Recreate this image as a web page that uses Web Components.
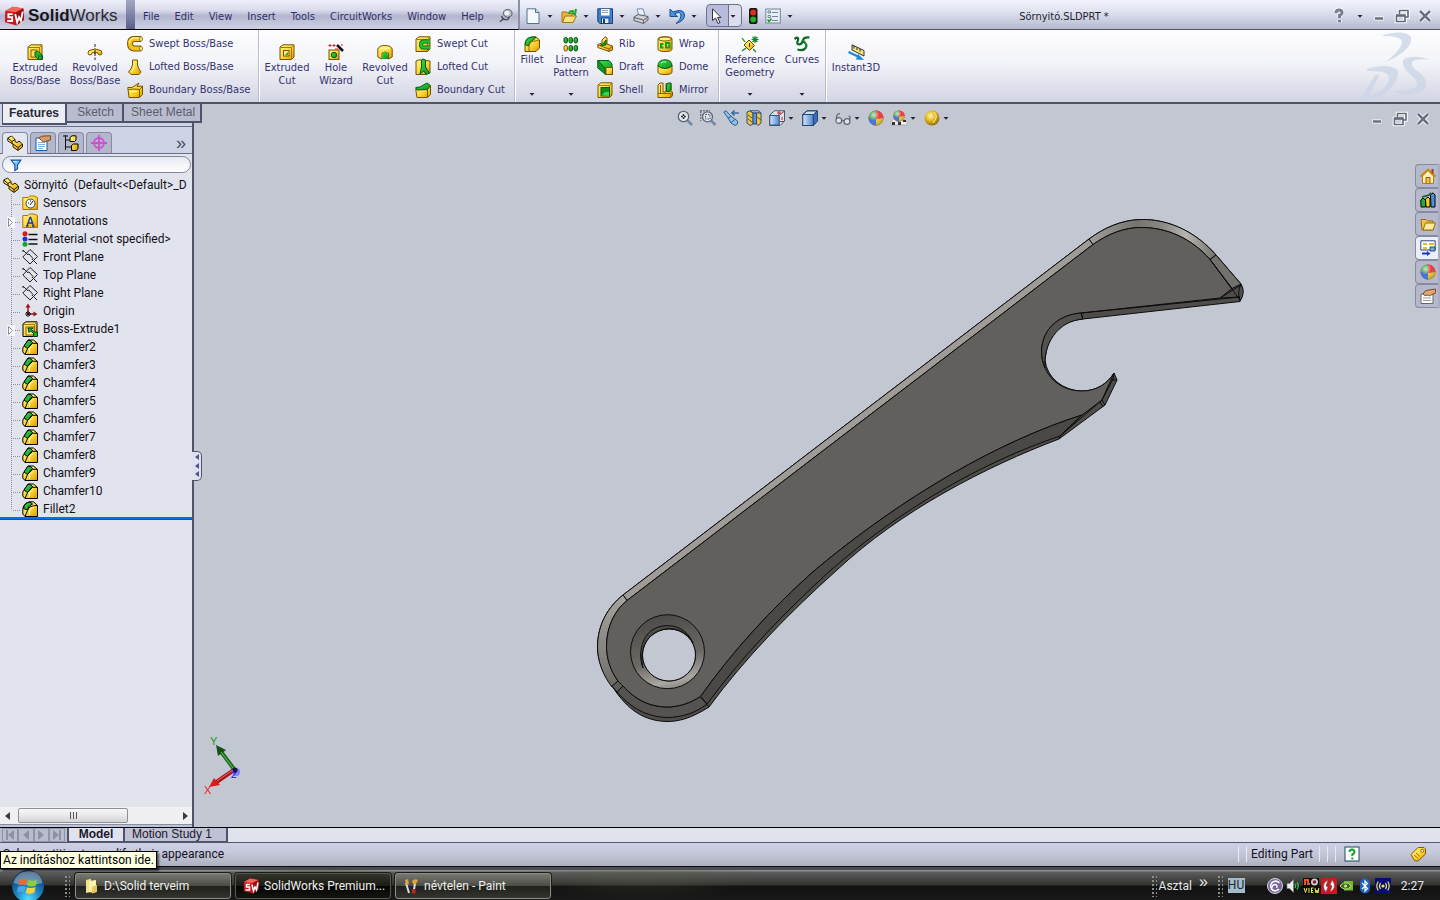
<!DOCTYPE html>
<html lang="hu">
<head>
<meta charset="utf-8">
<title>Sörnyitó.SLDPRT - SolidWorks</title>
<style>
html,body{margin:0;height:100%}
body{overflow:hidden;background:#c3c7d2}
</style>
</head>
<body>
<sw-app></sw-app>
<script>
const UI = '"DejaVu Sans Condensed","Liberation Sans",sans-serif';
const ARIAL = '"Liberation Sans",Arial,sans-serif';
const TREE = 'Roboto,"Open Sans",sans-serif';
const RESET = `:host,*{box-sizing:border-box}button{font:inherit;color:inherit;border:0;background:none;padding:0;margin:0;cursor:default;text-align:inherit}`;

function define(name, html, setup){
  const t = document.createElement('template');
  t.innerHTML = html;
  customElements.define(name, class extends HTMLElement{
    connectedCallback(){
      if(this.shadowRoot) return;
      this.attachShadow({mode:'open'}).append(t.content.cloneNode(true));
      if(setup) setup(this, this.shadowRoot);
    }
  });
}

const DEFS = `<defs>
<linearGradient id="y" x1="0" y1="0" x2="1" y2="1"><stop offset="0" stop-color="#fff68a"/><stop offset=".5" stop-color="#ffd83a"/><stop offset="1" stop-color="#d79a00"/></linearGradient>
<linearGradient id="g" x1="0" y1="0" x2="1" y2="1"><stop offset="0" stop-color="#3ee04a"/><stop offset="1" stop-color="#0a8f1e"/></linearGradient>
<linearGradient id="b" x1="0" y1="0" x2="1" y2="0"><stop offset="0" stop-color="#d3e8fc"/><stop offset="1" stop-color="#4c86d0"/></linearGradient>
<radialGradient id="s" cx=".35" cy=".3" r=".8"><stop offset="0" stop-color="#fff" stop-opacity=".75"/><stop offset=".5" stop-color="#fff" stop-opacity="0"/><stop offset="1" stop-color="#000" stop-opacity=".35"/></radialGradient>
<radialGradient id="au" cx=".4" cy=".35" r=".7"><stop offset="0" stop-color="#fff7b0"/><stop offset=".5" stop-color="#e3b21c"/><stop offset="1" stop-color="#8d6400"/></radialGradient>
<radialGradient id="orb" cx=".5" cy=".9" r=".9"><stop offset="0" stop-color="#4fe0ff"/><stop offset=".45" stop-color="#1c7fc0"/><stop offset="1" stop-color="#0c2c50"/></radialGradient>
</defs>`;
const BOX = `<path d="M1 3 4 .8H15V13L12.500 15.500H1Z" fill="url(#y)" stroke="#7a5200"/><path d="M1.500 3.500H12.500V15M12.500 3.500 15 1" fill="none" stroke="#a87800"/>`;
const BOXK = BOX.replace('#7a5200','#000');
const BALL = `<circle cx="8" cy="8" r="7.500" fill="#d8333a"/><path d="M8 .5A7.500 7.500 0 0 0 .5 8L8 9Z" fill="#2f9e3c"/><path d="M8 .5A7.500 7.500 0 0 1 15.500 8L8 9Z" fill="#e53b3b"/><path d="M.5 8A7.500 7.500 0 0 0 8 15.500V9Z" fill="#3c73d8"/><path d="M8 15.500A7.500 7.500 0 0 0 15.500 8L8 9Z" fill="#e8c12e"/>`;
const ICONS = {
 down:`<path d="M5.500 7h5L8 9.800Z" fill="#22223c"/>`,
 extrude:BOX+`<rect x="4" y="6" width="6" height="7" fill="#ffe35c" stroke="#8a6000"/><path d="M8 8 11 7.500 15.500 11.500V15.500H11.500L8 12Z" fill="url(#g)" stroke="#055c10"/><path d="M8 8.500 11.500 12V15M11.500 12H15" stroke="#055c10" fill="none" stroke-width=".7"/>`,
 revolve:`<path d="M8 0V16" stroke="#222" stroke-dasharray="3 1.500"/><path d="M1 9Q1 6 4 6 8 4 12 6 15 6 15 9 15 11 13 11 11 11 11 9 8 7.500 5 9 5 11 3 11 1 11 1 9Z" fill="url(#y)" stroke="#7a5200"/><circle cx="3" cy="9" r="1" fill="#fff3a0"/><path d="M8 6v4" stroke="#222"/>`,
 sweep:`<path d="M14 3H7Q3 3 3 7.500T7 12.500H14" fill="none" stroke="#7a5200" stroke-width="6"/><path d="M14 3H7Q3 3 3 7.500T7 12.500H14" fill="none" stroke="#f5c21c" stroke-width="4"/><path d="M13 2H7Q2.500 3 2.500 7" fill="none" stroke="#fff08a" stroke-width="1.300"/><ellipse cx="14" cy="3" rx="1.500" ry="2.300" fill="#ffec80" stroke="#7a5200" stroke-width=".7"/><ellipse cx="14" cy="12.500" rx="1.500" ry="2.300" fill="#ffec80" stroke="#7a5200" stroke-width=".7"/>`,
 loft:`<path d="M5.500 1H10.500V6Q11.500 10 14 13L12 15.500H4L1.500 13Q4.500 10 5.500 6Z" fill="url(#y)" stroke="#7a5200"/><path d="M7 3v5L5 13" stroke="#fff7a8" fill="none"/>`,
 boundary:`<path d="M.8 5.500H5L12 1 10 4.500 15.500 4V12.500L12.500 15.500H2Z" fill="url(#y)" stroke="#7a5200"/><path d="M1.500 7.500Q7 6.500 12.500 7.500L15 5M12.500 7.500V15" fill="none" stroke="#7a5200"/><path d="M3 9.500h7" stroke="#fff7a8"/>`,
 boundarycut:`<path d="M.8 6.500V8L2 15.500H12.500L15.500 12.500V4Z" fill="url(#y)" stroke="#7a5200"/><path d="M.8 5.500 5 5 12 1 15.500 3.500 12.500 7.500 2 8Z" fill="url(#g)" stroke="#055c10"/><path d="M12.500 8v7" stroke="#7a5200"/>`,
 excut:BOX+`<rect x="4.500" y="6.500" width="5.500" height="5.500" fill="#ffe98a" stroke="#7a5200"/><path d="M6 11 9 8V11Z" fill="#1dab2c"/>`,
 hole:`<rect x="1" y="6" width="10" height="9.500" fill="url(#y)" stroke="#7a5200"/><circle cx="6" cy="11" r="2.700" fill="url(#g)" stroke="#055c10"/><path d="M9 1 15 7" stroke="#111" stroke-width="2.500"/><path d="M2 0v3M.5 1.500h3M6 0v3M4.500 1.500h3M13 1h2M10 5h-3" stroke="#d22"/>`,
 revcut:`<path d="M.8 5Q2 1.500 8 1.500T15.200 5V13L11.500 15V9H5V15L.8 13Z" fill="url(#y)" stroke="#7a5200"/><path d="M5 15Q5 8 8 7 11 8 11.500 15Z" fill="url(#g)"/><ellipse cx="8" cy="4" rx="5" ry="1.500" fill="#fff08a"/>`,
 sweepcut:BOX+`<path d="M15 5.500H9Q6 5.500 6 8.500T9 11.500H15" fill="none" stroke="#055c10" stroke-width="4"/><path d="M15 5.500H9Q6 5.500 6 8.500T9 11.500H15" fill="none" stroke="#21c234" stroke-width="2.500"/>`,
 loftcut:`<path d="M1 2 4 .8 15 2V14L10 15.500H1Z" fill="url(#y)" stroke="#7a5200"/><path d="M6.500 1 8 0 10.500 1V8L14.500 14 11 15.500 9 12 5 15 6.500 8Z" fill="url(#g)" stroke="#055c10"/>`,
 fillet:`<path d="M1 9Q1 2 8 1L12 1 15.500 4V12L12 15.500H1Z" fill="url(#y)" stroke="#6b4a00"/><path d="M1 8.500Q1.500 1.500 8 1L12 1 9.500 4Q5 5 4.500 10Z" fill="url(#g)" stroke="#055c10"/><path d="M5 15V11Q5 5.500 11 5L15 4" fill="none" stroke="#9a6c00"/>`,
 linear:[1,6,11].map(x=>`<rect x="${x}" y="1.500" width="3.500" height="5.500" rx="1.700" fill="url(#g)" stroke="#064d0e"/><rect x="${x}" y="9.500" width="3.500" height="5.500" rx="1.700" fill="url(#${x==1?'y':'g'})" stroke="#${x==1?'7a5200':'064d0e'}"/>`).join(''),
 rib:`<path d="M5 4 8 .8 10 2V8L15.500 10V14L12 15.500 .8 11.500V8.500L5 7Z" fill="url(#y)" stroke="#7a5200"/><path d="M9 4V9L3 9.500Q7 8 9 4Z" fill="url(#g)" stroke="#055c10"/><path d="M1 9 12 13 15 10.500M12 13v2" fill="none" stroke="#8a6000"/>`,
 draft:`<path d="M.8 1.500H12L15 5V14L8 15.500V11Z" fill="url(#g)" stroke="#055c10"/><path d="M.8 1.500V9L8 15V9Z" fill="#0a9a22" stroke="#055c10"/><rect x="9" y="8.500" width="6.500" height="7" fill="url(#y)" stroke="#7a5200"/>`,
 shell:BOX+`<rect x="4" y="5.500" width="8.500" height="8.500" fill="#0a8f1e" stroke="#055c10"/><path d="M4.500 13.500 8 10H12V14Z" fill="#35d545"/>`,
 wrap:`<path d="M1 3Q1 .8 8 .8T15 3V13Q15 15.500 8 15.500T1 13Z" fill="url(#y)" stroke="#7a5200"/><ellipse cx="8" cy="3" rx="6.500" ry="2" fill="#fff08a" stroke="#7a5200"/><path d="M6.500 8H4V11.500H6.500M9 7H12.500V11.500H9Z" fill="none" stroke="#0ca31f" stroke-width="2"/>`,
 dome:`<path d="M1 6V13Q1 15.500 8 15.500T15 13V6Z" fill="url(#y)" stroke="#7a5200"/><path d="M1 7Q1 .8 8 .8T15 7Q12 9.500 8 9.500T1 7Z" fill="url(#g)" stroke="#055c10"/><path d="M4 4Q6 2 9 3" stroke="#b6ffb6" fill="none"/>`,
 mirror:`<path d="M1 3 3 1H6V10H9V1.500H14V10H15.500V13.500L14 15.500H1Z" fill="url(#y)" stroke="#7a5200"/><path d="M9.500 3 11 1H14V8L12.500 9.500H9.500Z" fill="url(#g)" stroke="#055c10"/><path d="M1 11.500H14V15M3.500 3v8" stroke="#8a6000" fill="none"/>`,
 refgeo:`<path d="M7 4 12.500 9.500 7.500 14.500 2 9Z" fill="url(#y)" stroke="#6b4a00"/><path d="M7.500 7v4" stroke="#333"/><path d="M0 2 3 6M0 15 4 12M11 13l3 3M13 0v7M9.500 3.500h7M10.500 1l5 5M15.500 1l-5 5" stroke="#11862a" stroke-width="1.200"/>`,
 curves:`<path d="M.5 3Q5 0 4 4 2 8.500 5.500 8.500 8.500 8 9 4 10 .8 15.500 1.500M9 4.500Q14 9 11.500 12 9 15.500 3.500 13.500" fill="none" stroke="#0b6b22" stroke-width="2.200"/><path d="M9.500 4Q14 9 11.500 12" fill="none" stroke="#2aa344"/>`,
 instant:`<path d="M4 .8 16 6.500V12L4 6Z" fill="#f9e27c" stroke="#333"/><path d="M6 2v2.500M9 3.500V6M12 5v2.500" stroke="#222"/><path d="M.5 8 11 13" stroke="#1b86e0" stroke-width="2"/><path d="M10 10 16 16 8 15.500Z" fill="#1b86e0"/>`,
 newdoc:`<path d="M2 .8H10.500L14 4.500V15.500H2Z" fill="#f3f8fd" stroke="#51718c"/><path d="M10.500 .8V4.500H14" fill="#c7dbea" stroke="#51718c"/>`,
 open:`<path d="M1 4H6L7 5.500H11V14H1Z" fill="#e6b83e" stroke="#a87014"/><path d="M1.500 14.500 4 8H15.500L12 14.500Z" fill="#ffe27c" stroke="#a87014"/><path d="M8 6Q8 2 13 3.500M10.500 4.500 14 6.500 15 1" fill="none" stroke="#20a326" stroke-width="2"/>`,
 save:`<path d="M.8 .8H15.500V15.500H3L.8 13.500Z" fill="#3f7fcb" stroke="#173e78"/><rect x="4" y="1" width="8.500" height="6.500" fill="#fff"/><path d="M5 2.500h6M5 4.500h6" stroke="#8b9fb5"/><rect x="4.500" y="10" width="7.500" height="5.500" fill="#dce8f5" stroke="#173e78"/><rect x="6" y="11" width="2" height="4" fill="#173e78"/>`,
 print:`<path d="M4 1 10 .8 12 7 6 8Z" fill="#e9f2fc" stroke="#7290b5"/><path d="M1 9 5 6.500 15 8.500V12L10.500 15.500 1 12.500Z" fill="#cfcfd6" stroke="#5e5e68"/><path d="M1 9.500 10.500 12 15 9M10.500 12V15" fill="none" stroke="#5e5e68"/><circle cx="13" cy="11.500" r=".8" fill="#e08a20"/>`,
 undo:`<path d="M1 1V8.500H8.500L5.500 5.800Q12 2.500 12 8 12 12 7 15.500 15.500 13 15.500 7 15 0 4 4Z" fill="#4a94dd" stroke="#184f91"/>`,
 cursor:`<path d="M3.500 .8V12.500L6.500 10 9 15.500 11 14.500 8.500 9.500H12Z" fill="#fff" stroke="#333"/>`,
 traffic:`<rect x="4" y="0" width="8.500" height="16" rx="2" fill="#1e1512"/><circle cx="8.200" cy="4.500" r="2.900" fill="#e12a20"/><circle cx="8.200" cy="11.500" r="2.900" fill="#1fb32e"/>`,
 options:`<rect x=".8" y="1" width="14.500" height="14" fill="#e9f0f5" stroke="#6d8898"/><path d="M7 4.500h6M7 8.500h6M7 12.500h6" stroke="#6d8898"/><path d="M3 3h2.500v2H3ZM3 7.500h2.500v2H3Z" fill="none" stroke="#6d8898"/><path d="M2.500 11.500 4 13.500 6.500 10.500" fill="none" stroke="#18982a" stroke-width="1.500"/>`,
 pin:`<ellipse cx="10" cy="5" rx="5" ry="4.500" fill="#b9bcc6" stroke="#4a4d58"/><ellipse cx="9" cy="4.500" rx="3" ry="2.500" fill="#f1f2f6"/><path d="M3 8Q4 13 10 12L12 9M5.500 11 1 14.500" fill="none" stroke="#4a4d58" stroke-width="1.600"/>`,
 logo:`<path d="M1 4 7 .5 15.500 2 16 11 10 15.500 .8 13Z" fill="#c8141a"/><path d="M1 4 7 .5 15.500 2 9.500 5Z" fill="#f4685c"/><path d="M9.500 5 15.500 2 16 11 10 15.500Z" fill="#9f0d12"/><path d="M7 6.500H3.500V9H6.500V12H2.500M9 6.500 10.500 13 12 9 13.500 12 15 4.500" fill="none" stroke="#fff" stroke-width="1.500"/>`,
 help:`<path d="M5 4.500Q5 1.500 8 1.500T11 4.500Q11 6.500 8.500 7.500V10M8.500 12v3" fill="none" stroke="#fff" stroke-width="4"/><path d="M5 5Q5 2 8 2T11 4.500Q11 6.500 8.500 7.500V10M8.500 12v2.500" fill="none" stroke="#7a7e90" stroke-width="3"/>`,
 min:`<path d="M3.500 10.500h9" stroke="#fff" stroke-width="4"/><path d="M4 10.500h8" stroke="#6b6e80" stroke-width="2.500"/>`,
 restore:`<path d="M5.500 6V2.500H14V9H11M2.500 7.500H11V13.500H2.500Z" fill="none" stroke="#fff" stroke-width="3.500"/><path d="M5.500 6V2.500H14V9H11M2.500 7.500H11V13.500H2.500Z" fill="none" stroke="#65687a" stroke-width="1.600"/><path d="M2 7.500H11.500" stroke="#65687a" stroke-width="2.500"/>`,
 close:`<path d="M3 3 13 13M13 3 3 13" stroke="#fff" stroke-width="4.500"/><path d="M3 3 13 13M13 3 3 13" stroke="#6e7184" stroke-width="2.500"/>`,
 part:`<path d="M.8 3 4.500 1 8 4.500V6.500L10 7.500 12 6 15.500 9V12L11 15.500 6 12V9L.8 6Z" fill="url(#y)" stroke="#2a2000"/><path d="M.8 3 5 6.500V9M5 6.500 8 4.500M6 9 11 12.500V15M11 12.500 15 9.500" fill="none" stroke="#2a2000"/>`,
 props:`<path d="M1 3H12V15.500H1Z" fill="#fff" stroke="#1d5a98"/><path d="M3 7.500h7M3 9.500h7M3 11.500h7M3 13.500h5" stroke="#7fb4e4"/><path d="M4 3Q6 .5 10 1L15.500 .8V5L12 6Q8 8 6.500 5.500Z" fill="#d79b6a" stroke="#7c4a20"/>`,
 config:`<path d="M2.500 0V15M0 1h5M2.500 5H7M2.500 12H8" stroke="#111" fill="none"/><path d="M7 2.500 9 .8H13V5L11.500 6.500H7ZM8.500 10.500 10.500 9H15V13.500L13.500 15.500H8.500Z" fill="url(#y)" stroke="#000"/>`,
 dimx:`<circle cx="8" cy="8" r="5" fill="none" stroke="#cf4fd2" stroke-width="1.800"/><path d="M8 0V16M0 8H16" stroke="#cf4fd2" stroke-width="1.800"/>`,
 funnel:`<path d="M1.500 1.500H14.500L10 8V13L6.500 15.500V8Z" fill="#7cc4f6" stroke="#0d50a8" stroke-width="1.500"/><path d="M4 3.500H9" stroke="#fff"/>`,
 sensors:`<path d="M.8 2.500H6L7.500 1H12L15.500 2.500V14.500H.8Z" fill="url(#y)" stroke="#a87500"/><circle cx="8.500" cy="8.500" r="4.500" fill="#f4f6f8" stroke="#2b4a6e"/><path d="M8 10 11 6M6 8h1M8.500 5.500v1" stroke="#222"/>`,
 annot:`<path d="M.8 2.500H6L7.500 1H12L15.500 2.500V14.500H.8Z" fill="url(#y)" stroke="#a87500"/><path d="M5 13 8 4.500H8.700L11.500 13M6 10h4.500M4 13h2.500M10 13h2.500" fill="none" stroke="#1536b8" stroke-width="1.300"/>`,
 material:`<path d="M6.500 3.500h9M6.500 8.500h9M6.500 13h9" stroke="#111" stroke-width="1.500"/><circle cx="3" cy="2.800" r="2.500" fill="#d71a1a"/><circle cx="3" cy="8" r="2.500" fill="#2030d8"/><circle cx="3" cy="13.200" r="2.500" fill="#14a828"/>`,
 plane:`<path d="M0 2H2M8 .5 15.500 7.500 8 15 .8 8ZM1 1 15 15" fill="none" stroke="#222"/><path d="M5 6 10 11" stroke="#e2e5ec" stroke-width="2.500"/><path d="M5 5.500 7 5 11 9.500 10 11" fill="none" stroke="#222"/>`,
 origin:`<path d="M6 2V11H13" fill="none" stroke="#a01018" stroke-width="1.500"/><path d="M3.500 4.500 6 .5 8.500 4.500ZM11.500 8.500 15.500 11 11.500 13.500Z" fill="#a01018"/><path d="M3 11h6M6 8v6M4 9l4 4M8 9l-4 4" stroke="#111"/>`,
 boss:BOXK+`<rect x="4" y="6" width="8" height="8" fill="#ffe98a" stroke="#8a6000"/><path d="M6 7H11L9.500 8.500 12.500 11H15.500V15.500H11.500V12L8.500 10 7 11.500Z" fill="#19b52c" stroke="#033f0a"/>`,
 chamfer:`<path d="M.8 9 6 1H11.500L15.500 4.500V15.500H3L.8 13Z" fill="url(#y)" stroke="#000"/><path d="M2 7 6 1.300H8L10.500 3.500 5.500 9.500Z" fill="url(#g)" stroke="#000"/><path d="M3 15.500 5.500 9.500 10.500 4.300H15.500" fill="none" stroke="#000"/><path d="M7.500 14V10L11 6.500" fill="none" stroke="#fff9b0"/>`,
 fillet2:`<path d="M.8 9Q1 2 8 .8H11.500L15.500 4.500V15.500H3L.8 13Z" fill="url(#y)" stroke="#000"/><path d="M1.500 7.500Q2.500 1.500 8 1L10.500 3Q5.500 5 5.500 9Z" fill="url(#g)" stroke="#000"/><path d="M3 15.500 5.500 9.500Q6.500 4.500 15.500 4.500" fill="none" stroke="#000"/><path d="M7.500 14V10Q8 7 12 6" fill="none" stroke="#fff9b0"/>`,
 zoomfit:`<circle cx="6.500" cy="6.500" r="5.200" fill="#e4e9f0" stroke="#5b6675" stroke-width="1.300"/><path d="M4 6.500h5M6.500 4v5" stroke="#333" stroke-width="1.600" stroke-dasharray="2 1"/><path d="M10.500 10.500 15 15" stroke="#7188a8" stroke-width="2.500"/>`,
 zoomarea:`<path d="M0 .8H10M.8 1V11" stroke="#555" stroke-dasharray="2 1"/><circle cx="7.500" cy="6.800" r="5" fill="#dfe5ec" stroke="#5b6675" stroke-width="1.300"/><path d="M5.500 4.500h4.500v4.500h-4.500Z" fill="none" stroke="#555" stroke-dasharray="1.500 1"/><path d="M11 10.500 15.500 15" stroke="#7188a8" stroke-width="2.500"/>`,
 prev:`<path d="M.8 2 3 .8 9 7 14.500 11V14L12 15.500 8 13 5 8Z" fill="#8fc0e8" stroke="#2f5f94"/><path d="M5 8 8.500 6.500M8 12.500 12 9.500" stroke="#2f5f94"/><path d="M9 3H16M11.500 .5 9 3 11.500 5.500" fill="none" stroke="#3b6da8" stroke-width="1.700"/>`,
 section:`<path d="M1 2 4 .8 7 3V14L4 15.500 1 13Z" fill="#f0c53a" stroke="#2f4f78"/><path d="M4 .8H13L15 3H7Z" fill="#b9d6f3" stroke="#2f4f78"/><path d="M7 3H10.500V14L7 14Z" fill="#5a94dc" stroke="#2f4f78"/><path d="M10.500 3H15V13L12 15.500 10.500 14Z" fill="#f0c53a" stroke="#2f4f78"/><path d="M2 5 6 8M2 9 6 12M11 7 15 10" stroke="#555"/>`,
 vieworient:`<path d="M.8 5 5.500 .8H15.500V11L11 15.500H.8Z" fill="#dfe5ec" stroke="#3f566f"/><rect x=".8" y="5.500" width="9.500" height="9.500" fill="url(#b)" stroke="#3f566f"/><path d="M10.500 5 15.500 1M8 3h4M10 1v4M11 11.500h4M13 7v3" stroke="#b02828" fill="none"/>`,
 display:`<path d="M.8 4.500 5 .8H15.500V11L11.500 15.500H.8Z" fill="#3d6bb8" stroke="#24466f"/><rect x=".8" y="4.500" width="10.500" height="11" fill="url(#b)" stroke="#24466f"/><path d="M1 4.500 5 1H15L11.500 4.500Z" fill="#cfe0f2" stroke="#24466f"/>`,
 glasses:`<circle cx="3.800" cy="10.500" r="2.900" fill="#dfe3ea" stroke="#5c6470" stroke-width="1.200"/><circle cx="12" cy="11.500" r="2.900" fill="#dfe3ea" stroke="#5c6470" stroke-width="1.200"/><path d="M6.500 10 9 11M1.500 9Q1 4 5 3.500M14.500 10Q16 6 13.500 6" fill="none" stroke="#5c6470" stroke-width="1.200"/>`,
 ball:BALL+`<circle cx="8" cy="8" r="7.500" fill="url(#s)"/>`,
 scene:`<path d="M0 12 3 9H13L16 12V15H0Z" fill="#eee" stroke="#888" stroke-width=".5"/><path d="M1 12h3v3H1ZM7 12h3v3H7ZM12 10h3v2H12Z" fill="#333"/><g transform="translate(2 0) scale(.75)">${BALL}<circle cx="8" cy="8" r="7.500" fill="url(#s)"/></g>`,
 gold:`<circle cx="8" cy="8" r="7.500" fill="url(#au)"/><path d="M10 2Q15 6 9 13" stroke="#fff4b0" fill="none"/>`,
 home:`<path d="M2.500 8V15.500H13.500V8L8 2.500Z" fill="#fdf0b4" stroke="#b57a10"/><path d="M.5 8.500 8 1.500 15.500 8.500" fill="none" stroke="#c68a18" stroke-width="1.800"/><path d="M12.500 1v4.500" stroke="#b03020" stroke-width="2"/><path d="M6 15V9.500H10V15" fill="#f5c243" stroke="#8a5a08"/>`,
 library:`<path d="M.8 8 3 6 5.500 8V15H1Z" fill="#26ad38" stroke="#000"/><path d="M5.500 7 8 5 10 7V15H6Z" fill="#f3d21c" stroke="#000"/><path d="M10.500 3 13 .8 15 3V15H11Z" fill="#4f8fdd" stroke="#000"/><path d="M2 5 9 3 11 .8" stroke="#0b5f18" stroke-width="1.500" fill="none"/>`,
 folder:`<path d="M1 3.500H6L7.500 5H13V14H2Z" fill="#f3c44a" stroke="#9b6a10"/><path d="M3 14 5.500 7H15.500L13 14Z" fill="#ffeaa0" stroke="#9b6a10"/>`,
 palette:`<path d="M.8 .8H15.200V10H.8Z" fill="#fff" stroke="#2a4a7a"/><path d="M3 3h4v2H3ZM9 3h5v2H9ZM3 7h4v2H3Z" fill="#e9b91f"/><path d="M10 7h5v4h-5Z" fill="#7fa7d8" stroke="#2a4a7a"/><path d="M2 13.500H8" stroke="#1c35c8" stroke-width="2"/><path d="M7 11 10.500 13.500 7 16Z" fill="#1c35c8"/>`,
 custom:`<path d="M1 6H13V15.500H1Z" fill="#fff" stroke="#666"/><path d="M3 10h8M3 12.500h8" stroke="#999"/><path d="M3 6Q5 1.500 9 2L15.500 1V5L12 6.500Q9 9 8 7L5 7.500Z" fill="#e0a777" stroke="#7c4a20"/>`,
 qhelp:`<rect x="1" y="1" width="14" height="14" fill="#fff" stroke="#1f4b5d"/><path d="M5.500 6Q5.500 3.500 8 3.500T10.500 6Q10.500 7.500 8.300 8.500V10M8.300 11.500v2" fill="none" stroke="#12a32a" stroke-width="2"/>`,
 tag:`<path d="M1 8.500 8 1.500 14 1.500 15.500 3V8L8 15 4.500 14.500Z" fill="url(#y)" stroke="#8a5a00"/><circle cx="12.300" cy="4.700" r="1.500" fill="#fff" stroke="#8a5a00"/><path d="M4 9 8 12.500M6 7 10 10.500" stroke="#a87500"/>`,
 orb:`<circle cx="8" cy="8" r="8" fill="url(#orb)"/><path d="M.8 6.500Q2 .8 8 .5T15.200 6.500Q8 8.500 .8 6.500Z" fill="#fff" opacity=".35"/><path d="M3.800 5Q5.500 3.800 7.500 4.800L7 7.600Q5 6.800 3.200 7.800Z" fill="#ef6a2c"/><path d="M8.200 5Q10.500 5.900 12.600 4.800L12 7.700Q9.800 8.700 7.700 7.800Z" fill="#8ccf3a"/><path d="M3 8.500Q5 7.500 6.800 8.400L6.200 11.300Q4.300 10.500 2.500 11.300Z" fill="#4aa7ee"/><path d="M7.500 8.600Q9.700 9.500 11.800 8.500L11.200 11.300Q9 12.400 6.900 11.500Z" fill="#fbd13a"/>`,
 winfolder:`<path d="M3 2 8 .8V14L3 15Z" fill="#f7e08a"/><path d="M6 3 13 2V13L11 15 6 14Z" fill="#fdf0b0"/><path d="M9 9 14 7V14L9 15.500Z" fill="#e4c65c"/>`,
 paint:`<path d="M3 5 6 15M12 5 10.500 15" stroke="#d9dbe0" stroke-width="2"/><path d="M2 2 5 1 6 6 3 7ZM9 3Q12 0 15 2L13 6 10 6Z" fill="#e3a33a"/><path d="M9 11h3.500v4.500H9Z" fill="#b32a1c"/>`,
 swirl:`<circle cx="8" cy="8" r="7.500" fill="#75639f" stroke="#ddd"/><path d="M12.500 5Q9 1.500 5 4.500 2 8.500 5.500 12 9.500 14 12 11" fill="none" stroke="#fff" stroke-width="1.700"/><path d="M5 10Q5 6.500 8.500 6.500 11 7.500 9.500 10" fill="none" stroke="#fff" stroke-width="1.400"/>`,
 volume:`<path d="M2 5.500H4.500L8.500 1.500V14.500L4.500 10.500H2Z" fill="#e9edf0" stroke="#777" stroke-width=".6"/><path d="M10 6Q11.500 8 10 10M12 4.500Q14.500 8 12 11.500" fill="none" stroke="#3fbf5a" stroke-width="1.300"/>`,
 view:`<path d="M0 0H16V16H0Z" fill="#0b0b0b"/><path d="M2 7V2H5V6H7" fill="none" stroke="#e8552c" stroke-width="2"/><circle cx="11.500" cy="4" r="3.500" fill="#ccc"/><circle cx="11.500" cy="4" r="1.800" fill="#8c1a30"/><path d="M1 10 2.500 14.500 4 10M6 10v5M8 10h2.500M8 12.500h2M8 14.500h2.500M8.500 10v5M12 10l1 5 1-3 1 3 .8-5" fill="none" stroke="#ecec50"/>`,
 ati:`<rect width="16" height="16" fill="#d01818"/><path d="M7 2Q1 5 3 11L5 14 7 9 5 8ZM9 14Q15 11 13 5L11 2 9 7 11 8Z" fill="#f4f4f4" stroke="#555" stroke-width=".6"/>`,
 nvidia:`<path d="M5 3H14V12.500H5Z" fill="#77b82a"/><path d="M1 8Q4 3.500 9 5 12 7 12 8.500 9 12 5.500 11 2 10 1 8Z" fill="#3f6b14" stroke="#bfe58c"/><circle cx="6.500" cy="8" r="1.500" fill="#cdeaa5"/>`,
 bluetooth:`<rect x="3" y=".5" width="10" height="15" rx="5" fill="#1b63c4"/><path d="M5 5 10.500 10.500 8 13V3L10.500 5.500 5 11" fill="none" stroke="#fff" stroke-width="1.200"/>`,
 wifi:`<rect width="16" height="16" fill="#0a0a78"/><circle cx="8" cy="8" r="1.600" fill="#e7e85a"/><path d="M5.500 5Q3.500 8 5.500 11M3.200 3.500Q.5 8 3.200 12.500M10.500 5Q12.500 8 10.500 11M12.800 3.500Q15.500 8 12.800 12.500" fill="none" stroke="#e7e85a" stroke-width="1.200"/>`
};

define('sw-icon', `<style>:host{display:block;flex:none;width:16px;height:16px}svg{display:block;width:100%;height:100%;overflow:visible}</style>`,
 (h,r)=>{ r.append(document.createRange().createContextualFragment(`<svg viewBox="0 0 16 16" aria-hidden="true">${DEFS}${ICONS[h.getAttribute('name')]||''}</svg>`)); });

/* ---------- title bar ---------- */
define('sw-titlebar', `<style>${RESET}
:host{display:flex;height:30px;font:11px/29px ${UI};color:#2f2f68;background:linear-gradient(#f2f4fc,#dfe2f0 40%,#b6bad0);border-bottom:1px solid #55566c}
.left{display:flex;width:520px;height:30px;flex:none;border-right:2px solid #8c90a6;border-bottom:1px solid #000;background:linear-gradient(#eef0fa,#dadcec 35%,#b4b6cf 55%,#cfd1e2)}
.brand{display:flex;align-items:center;width:126px;padding:2px 4px 0;gap:4px;font:17px/26px ${ARIAL};color:#2a2a30}
.brand sw-icon{width:20px;height:20px}
.brand b{color:#17171b}
.bar{width:9px;background:linear-gradient(#a5a8c2,#5c5f8c)}
nav{display:flex;flex:1;padding:3px 5px 0 8px;justify-content:space-between;align-items:center}
nav sw-icon{width:14px;height:14px}
.tools{display:flex;align-items:center;gap:4px;padding:2px 0 0 5px}
.tools button,.win button{display:flex;align-items:center}
.tools button.pair{gap:2px;width:32px}
.pair sw-icon[name=down]{margin:0 -1px}
.tools .sel{width:36px;height:23px;margin:0 -1px 0 1px;padding-left:2px;border:1px solid #6f728c;border-radius:4px;background:linear-gradient(90deg,#b9bbdc 21px,#6f728c 21px 22px,#dcdeee 22px)}
.title{flex:1;text-align:center;color:#23232b;padding:2px 0 0 0}
.win{display:flex;align-items:center;gap:7px;padding:2px 7px 0 0}
.win sw-icon[name=down]{margin:0 -4px 0 -2px}
</style>
<div class="left"><div class="brand"><sw-icon name="logo"></sw-icon><span><b>Solid</b>Works</span></div><div class="bar"></div>
<nav><button>File</button><button>Edit</button><button>View</button><button>Insert</button><button>Tools</button><button>CircuitWorks</button><button>Window</button><button>Help</button><button aria-label="Pin"><sw-icon name="pin"></sw-icon></button></nav></div>
<div class="tools">
<button class="pair" aria-label="New"><sw-icon name="newdoc"></sw-icon><sw-icon name="down"></sw-icon></button>
<button class="pair" aria-label="Open"><sw-icon name="open"></sw-icon><sw-icon name="down"></sw-icon></button>
<button class="pair" aria-label="Save"><sw-icon name="save"></sw-icon><sw-icon name="down"></sw-icon></button>
<button class="pair" aria-label="Print"><sw-icon name="print"></sw-icon><sw-icon name="down"></sw-icon></button>
<button class="pair" aria-label="Undo"><sw-icon name="undo"></sw-icon><sw-icon name="down"></sw-icon></button>
<button class="sel" aria-label="Select"><sw-icon name="cursor"></sw-icon><sw-icon name="down"></sw-icon></button>
<button aria-label="Rebuild"><sw-icon name="traffic"></sw-icon></button>
<button class="pair" aria-label="Options"><sw-icon name="options"></sw-icon><sw-icon name="down"></sw-icon></button></div>
<div class="title">Sörnyitó.SLDPRT *</div>
<div class="win"><button aria-label="Help"><sw-icon name="help"></sw-icon></button><button aria-label="Help menu"><sw-icon name="down"></sw-icon></button><button aria-label="Minimize"><sw-icon name="min"></sw-icon></button><button aria-label="Restore"><sw-icon name="restore"></sw-icon></button><button aria-label="Close"><sw-icon name="close"></sw-icon></button></div>`);

/* ---------- ribbon ---------- */
define('ribbon-button', `<style>${RESET}
:host{display:block;flex:none}
button{display:flex;flex-direction:column;align-items:center;width:100%;height:72px;padding-top:14px;text-align:center;line-height:13px}
.t{margin-top:1px;white-space:nowrap}
:host([menu]) button{padding-top:6px}
.a{display:none;margin-top:auto}
:host([menu]) .a{display:block}
:host([small]) button{flex-direction:row;height:23px;padding:0;gap:6px}
:host([small]) .t{margin:0}
</style><button><sw-icon></sw-icon><span class="t"><slot></slot></span><sw-icon class="a" name="down"></sw-icon></button>`,
 (h,r)=>{ const o=r.querySelector('sw-icon'); const n=document.createElement('sw-icon'); n.setAttribute('name',h.getAttribute('icon')); o.replaceWith(n); });

define('ribbon-group', `<style>:host{display:flex;box-sizing:border-box;flex:none;height:72px;border-right:1px solid #b9bccd;box-shadow:1px 0 #fff}:host([last]){border:0;box-shadow:none}</style><slot></slot>`);
define('ribbon-stack', `<style>:host{display:block;box-sizing:border-box;flex:none;padding:2px 0 0 2px}</style><slot></slot>`);

define('sw-ribbon', `<style>${RESET}
:host{display:flex;height:74px;font:11px/13px ${UI};color:#33336f;background:linear-gradient(#fdfdff,#f3f4f9 45%,#d2d4e2);border-bottom:2px solid #50526a}
.w34{width:34px}.w42{width:42px}.w44{width:44px}.w56{width:56px}.w60{width:60px}.w62{width:62px}
.first{padding-left:5px;width:259px}.second{width:256px}.third{width:204px}.fourth{width:107px}
.ml{padding-left:4px}
.ds{margin-left:auto;margin-right:6px;height:72px;width:76px;flex:none}
</style>
<ribbon-group class="first"><ribbon-button class="w60" icon="extrude">Extruded<br>Boss/Base</ribbon-button><ribbon-button class="w60" icon="revolve">Revolved<br>Boss/Base</ribbon-button>
<ribbon-stack><ribbon-button small icon="sweep">Swept Boss/Base</ribbon-button><ribbon-button small icon="loft">Lofted Boss/Base</ribbon-button><ribbon-button small icon="boundary">Boundary Boss/Base</ribbon-button></ribbon-stack></ribbon-group>
<ribbon-group class="second"><ribbon-button class="w56" icon="excut">Extruded<br>Cut</ribbon-button><ribbon-button class="w42" icon="hole">Hole<br>Wizard</ribbon-button><ribbon-button class="w56" icon="revcut">Revolved<br>Cut</ribbon-button>
<ribbon-stack><ribbon-button small icon="sweepcut">Swept Cut</ribbon-button><ribbon-button small icon="loftcut">Lofted Cut</ribbon-button><ribbon-button small icon="boundarycut">Boundary Cut</ribbon-button></ribbon-stack></ribbon-group>
<ribbon-group class="third"><ribbon-button class="w34" menu icon="fillet">Fillet</ribbon-button><ribbon-button class="w44" menu icon="linear">Linear<br>Pattern</ribbon-button>
<ribbon-stack class="w62 ml"><ribbon-button small icon="rib">Rib</ribbon-button><ribbon-button small icon="draft">Draft</ribbon-button><ribbon-button small icon="shell">Shell</ribbon-button></ribbon-stack>
<ribbon-stack><ribbon-button small icon="wrap">Wrap</ribbon-button><ribbon-button small icon="dome">Dome</ribbon-button><ribbon-button small icon="mirror">Mirror</ribbon-button></ribbon-stack></ribbon-group>
<ribbon-group class="fourth"><ribbon-button class="w62" menu icon="refgeo">Reference<br>Geometry</ribbon-button><ribbon-button class="w42" menu icon="curves">Curves</ribbon-button></ribbon-group>
<ribbon-group last><ribbon-button class="w60" icon="instant">Instant3D</ribbon-button></ribbon-group>
<svg class="ds" viewBox="1358 30 76 72" fill="#cdd6e8" opacity=".8" aria-hidden="true"><path d="M1383 35Q1405 29 1411 37 1413 50 1386 62 1403 48 1402 41 1400 36 1383 36Z"/><path d="M1367 69Q1390 62 1398 71 1399 80 1388 91 1376 101 1359 101L1374 77Q1377 73 1379 76L1368 97Q1390 88 1389 77 1388 70 1367 71Z"/><path d="M1430 60Q1416 54 1404 59 1400 66 1412 76 1421 84 1414 88 1406 91 1392 91 1412 98 1424 90 1430 82 1420 73 1409 66 1413 61 1419 58 1430 60Z"/></svg>`);

/* ---------- command tabs ---------- */
define('command-tabs', `<style>${RESET}
:host{display:flex;font:12px/17px ${ARIAL};color:#5b5d6b}
button{height:19px;padding:0 5px 0 7px;text-align:center;border:1px solid #50526a;border-width:0 2px 2px 0;background:#b9bcce}
button.on{height:21px;font-weight:bold;color:#2b2b35;padding:0 6px;background:#eceef5;border-left:1px solid #50526a}
.sk{width:57px}
</style><button class="on" aria-pressed="true">Features</button><button class="sk">Sketch</button><button>Sheet Metal</button>`);

/* ---------- feature tree ---------- */
define('tree-item', `<style>${RESET}
:host{display:flex;align-items:center;height:18px;white-space:nowrap;overflow:hidden}
svg{flex:none;width:22px;height:18px}
span{margin-left:5px}
:host([root]){padding-left:3px}
:host([root]) svg,.ex{display:none}
:host([expand]) .ex{display:inline}
</style><svg viewBox="0 0 22 18" aria-hidden="true"><path class="v" d="M11.500 0V18" stroke="#8a8d97" stroke-dasharray="1 1"/><path d="M13 10.500H21" stroke="#8a8d97" stroke-dasharray="1 1"/><g class="ex"><path d="M7 5h8v11H7Z" fill="#f6f7fa"/><path d="M8.500 6.500V14.500L12.500 10.500Z" fill="#fff" stroke="#8d8f99"/></g></svg><sw-icon></sw-icon><span><slot></slot></span>`,
 (h,r)=>{ const n=document.createElement('sw-icon'); n.setAttribute('name',h.getAttribute('icon')); r.querySelector('sw-icon').replaceWith(n); if(h.hasAttribute('end')) r.querySelector('.v').setAttribute('d','M11.5 0V10'); });

define('feature-panel', `<style>${RESET}
:host{display:flex;flex-direction:column;position:relative;z-index:1;width:194px;flex:none;padding:22px 0 0 0;background:#cfd3e6;font:12px/18px ${TREE};color:#141018;border-right:2px solid #50526a}
.tabs{display:flex;gap:2px;height:28px;padding:6px 4px 0 2px;border-top:1px solid #6a6e8a;border-bottom:1px solid #6a6e8a;align-items:flex-end}
.tabs button{width:26px;height:21px;padding:2px 4px 3px;border:1px solid #8589a2;border-bottom:0;border-radius:4px 4px 0 0;background:#b3b7cc}
.tabs button.on{background:#e4e7f0;height:22px;margin-bottom:-1px}
.tabs .more{margin-left:auto;width:12px;height:21px;border:0;background:none;padding:0;font:18px/16px ${ARIAL};color:#4b4e63}
.filter{display:flex;align-items:center;gap:4px;height:17px;margin:2px 1px 3px 2px;padding-left:7px;border:1px solid #83879b;border-radius:9px;background:linear-gradient(#e6e9f2,#fff)}
.filter sw-icon{width:12px;height:12px}
.filter input{flex:1;min-width:0;border:0;background:none;font:inherit;height:13px;padding:0;outline:0}
.body{flex:1;background:#e1e4ec;display:flex;flex-direction:column;min-height:0}
ul{list-style:none;margin:0;padding:0}
.roll{height:3px;background:#0a6ee8;margin-top:-1px;border-bottom:1px solid #2b4f80;flex:none}
.sb{display:flex;align-items:center;height:17px;margin-top:auto;background:#f0f0f2;padding:0 4px 0 5px;justify-content:space-between}
.sb i{border:4px solid transparent;border-left:5px solid #3a3a3a;border-right:0}
.sb i.l{border-left:0;border-right:5px solid #3a3a3a}
.thumb{width:110px;height:15px;margin-right:auto;margin-left:8px;border:1px solid #8f9096;border-radius:2px;background:linear-gradient(#f7f7f7,#e9e9eb 50%,#d2d3d6);display:flex;justify-content:center;align-items:center;gap:2px}
.thumb b{width:1px;height:7px;background:#555}
.foot{height:3px;background:#bfc3d8;border-top:1px solid #8b8fa6}
.handle{position:absolute;right:-10px;top:calc(50% - 15px);width:10px;height:30px;border:1px solid #50526a;border-left:0;border-radius:0 5px 5px 0;background:#dfe2ee;display:flex;flex-direction:column;align-items:center;justify-content:space-evenly}
.handle i{border:3px solid transparent;border-right:4px solid #50528c;border-left:0}
</style>
<div class="tabs"><button class="on" aria-label="FeatureManager"><sw-icon name="part"></sw-icon></button><button aria-label="PropertyManager"><sw-icon name="props"></sw-icon></button><button aria-label="ConfigurationManager"><sw-icon name="config"></sw-icon></button><button aria-label="DimXpertManager"><sw-icon name="dimx"></sw-icon></button><button class="more">»</button></div>
<div class="body"><label class="filter"><sw-icon name="funnel"></sw-icon><input type="text" aria-label="Filter"></label>
<tree-item root icon="part">Sörnyitó&nbsp; (Default&lt;&lt;Default&gt;_D</tree-item>
<ul></ul><div class="roll"></div>
<div class="sb"><i class="l"></i><div class="thumb"><b></b><b></b><b></b></div><i></i></div><div class="foot"></div></div>
<button class="handle" aria-label="Collapse"><i></i><i></i><i></i></button>`,
 (h,r)=>{
  const rows=[['sensors','Sensors'],['annot','Annotations','expand'],['material','Material <not specified>'],['plane','Front Plane'],['plane','Top Plane'],['plane','Right Plane'],['origin','Origin'],['boss','Boss-Extrude1','expand']];
  for(let i=2;i<=10;i++) rows.push(['chamfer','Chamfer'+i]);
  rows.push(['fillet2','Fillet2','end']);
  for(const [ic,tx,at] of rows){ const li=document.createElement('li'), e=document.createElement('tree-item'); e.setAttribute('icon',ic); if(at) e.setAttribute(at,''); e.textContent=tx; li.append(e); r.querySelector('ul').append(li); }
 });

/* ---------- viewport ---------- */
define('view-tools', `<style>${RESET}:host{display:flex;align-items:center;gap:7px}button{display:flex}.p{gap:2px;width:26px}.p sw-icon[name=down]{margin:0 -4px}</style>
<button aria-label="Zoom to fit"><sw-icon name="zoomfit"></sw-icon></button><button aria-label="Zoom to area"><sw-icon name="zoomarea"></sw-icon></button><button aria-label="Previous view"><sw-icon name="prev"></sw-icon></button><button aria-label="Section view"><sw-icon name="section"></sw-icon></button>
<button class="p" aria-label="View orientation"><sw-icon name="vieworient"></sw-icon><sw-icon name="down"></sw-icon></button><button class="p" aria-label="Display style"><sw-icon name="display"></sw-icon><sw-icon name="down"></sw-icon></button><button class="p" aria-label="Hide or show items"><sw-icon name="glasses"></sw-icon><sw-icon name="down"></sw-icon></button>
<button aria-label="Edit appearance"><sw-icon name="ball"></sw-icon></button><button class="p" aria-label="Apply scene"><sw-icon name="scene"></sw-icon><sw-icon name="down"></sw-icon></button><button class="p" aria-label="View settings"><sw-icon name="gold"></sw-icon><sw-icon name="down"></sw-icon></button>`);

define('task-pane', `<style>${RESET}:host{display:block;width:25px;border-right:2px solid #a9adc0}button{display:block;width:23px;height:24px;padding:3px 3px 4px 4px;border:1px solid #878ba2;border-right:0;border-radius:4px 0 0 4px;background:#b5b9cb}button.on{background:#eceff6}</style>
<button aria-label="Resources"><sw-icon name="home"></sw-icon></button><button aria-label="Design library"><sw-icon name="library"></sw-icon></button><button aria-label="File explorer"><sw-icon name="folder"></sw-icon></button><button class="on" aria-label="View palette"><sw-icon name="palette"></sw-icon></button><button aria-label="Appearances"><sw-icon name="ball"></sw-icon></button><button aria-label="Custom properties"><sw-icon name="custom"></sw-icon></button>`);

define('model-view', `<style>${RESET}
:host{display:block;position:relative;flex:1;min-width:0;background:#c3c7d2;overflow:hidden}
.scene{display:block;width:100%;height:100%}
view-tools{position:absolute;top:6px;left:0;right:8px;justify-content:center}
.win{position:absolute;top:7px;right:9px;display:flex;gap:7px}
task-pane{position:absolute;right:0;top:60px}
</style>
<svg class="scene" viewBox="194 104 1246 723" preserveAspectRatio="xMidYMid meet" role="img" aria-label="Bottle opener model">
<defs>
<linearGradient id="arc" gradientUnits="userSpaceOnUse" x1="1090" y1="240" x2="1216" y2="255"><stop offset="0" stop-color="#a19e99"/><stop offset=".35" stop-color="#75746f"/><stop offset=".55" stop-color="#8b8984"/><stop offset=".75" stop-color="#b8b5b0"/><stop offset="1" stop-color="#74726e"/></linearGradient>
<linearGradient id="left" gradientUnits="userSpaceOnUse" x1="0" y1="595" x2="0" y2="700"><stop offset="0" stop-color="#a7a49f"/><stop offset=".7" stop-color="#7c7a75"/><stop offset="1" stop-color="#5d5b57"/></linearGradient>
<linearGradient id="ring" gradientUnits="userSpaceOnUse" x1="655" y1="615" x2="672" y2="689"><stop offset="0" stop-color="#4c4a47"/><stop offset=".6" stop-color="#6c6965"/><stop offset=".9" stop-color="#aaa7a2"/><stop offset="1" stop-color="#8c8985"/></linearGradient>
</defs>
<g stroke="#0c0c0c" stroke-width="1" stroke-linejoin="round">
<path fill="#4f4d4a" d="M623 595 1089 239C1104 228 1121 220 1141 219.500 1170 219 1197 233 1216 255L1241 284Q1246 292 1240 301.500L1083 319Q1048 322 1045 360A37.500 34 0 0 0 1082 391C1097 391 1108 383 1114 373L1117 380 1105 405 1059 439C985 467 900 511 837 570 790 612 745 658 709 707 690 719 678 721.500 667 721.500 645 721 628 711 612 686 602 672 597.500 660 597.500 646 598 624 608 607 623 595Z"/>
<path fill="#9f9b96" d="M623 595 1089 239 1093 244.500 627 600.500Z"/>
<path fill="url(#arc)" d="M1089 239C1104 228 1121 220 1141 219.500 1170 219 1197 233 1216 255L1210 259.500C1192 239 1168 227.500 1141 227.500 1124 227.500 1108 234 1093 244.500Z"/>
<path fill="#73716d" d="M1216 255 1241 284 1232 288.500 1210 259.500Z"/>
<path fill="url(#left)" d="M623 595C608 607 598 624 597.500 646 597.500 660 602 674 612 687L618 681C610 670 606.500 658 606.500 645 607 626 615 610 627 600.500Z"/>
<path fill="#5e5c59" d="M612 686 618 681 623 686 617 692Z"/>
<path fill="#555350" d="M617 692 623 686C637 701 650 706.500 667 707 679 707 690 703 700.500 696.500L707 704C696 713 681 717.500 667 717.500 647 717 631 708 617 692Z"/>
<path fill="#62605d" d="M627 600.500 1093 244.500C1108 234 1124 227.500 1141 227.500 1168 227.500 1192 239 1210 259.500L1232 288.500 1220 298 1081 313C1058 315 1043 329 1041.500 350 1041.500 358 1043 363 1045 368 1051 382 1065 391 1082 391 1097 391 1108 383 1114 373L1102 400 1082 415C1000 441 905 495 815 570 770 610 732 652 700.500 696.500 690 703 679 707 667 707 650 706.500 637 701 623 686L618 681C610 670 606.500 658 606.500 645 607 626 615 610 627 600.500Z"/>
<path fill="#54524f" d="M1081 313C1058 315 1043 329 1041.500 350 1041.500 358 1043 363 1045 368 1043 345 1057 321 1083 319Z"/>
<path fill="#4b4946" d="M1082 415C1000 441 905 495 815 570 770 610 732 652 700.500 696.500L707 704C745 653 785 612 831 570 900 510 980 463 1060 436Z"/>
<path fill="none" d="M1220 298 1241 285M1210 259.500 1240 300M1220 298 1240 297M1081 313 1240 297M1241 284Q1237 292 1240 301M1081 313 1083 319M1102 400 1105 405M1100 402 1103 407M1102 400 1060 436 1059 439M1114 373 1113 380 1117 380M1102 400 1113 379M700.500 696.500 709 707M1082 415 1060 436"/>
<path fill="url(#ring)" fill-rule="evenodd" d="M630.500 651.700a37 37 0 1 0 74 0a37 37 0 1 0-74 0ZM642.500 655a26.500 26 0 1 0 53 0a26.500 26 0 1 0-53 0Z"/>
<ellipse cx="669" cy="655" rx="26.500" ry="26" fill="#c3c7d2"/>
<path fill="#4d4b48" d="M643 668C638 655 641 638 652 630 665 622 685 624 693 643 685 628 668 625 655 633 643 640 640 655 643 668Z"/>
</g>
<g font-family="Liberation Sans,sans-serif" font-size="11"><path d="M234 769 219 749" stroke="#1c6a1c" stroke-width="4"/><path d="M216 745 226 750 218 756Z" fill="#145214"/><path d="M221 752 233 768" stroke="#5fc05f" stroke-width="1"/><path d="M234 770 215 783" stroke="#a81414" stroke-width="4"/><path d="M209 787 214 778 220 785Z" fill="#d81c1c"/><path d="M217 781 233 770" stroke="#f06a6a"/><circle cx="236" cy="772" r="4" fill="#7f80ee"/><circle cx="235" cy="770" r="2.500" fill="#15154a"/>
<text x="210" y="745" fill="#159a15">Y</text><text x="204" y="794" fill="#f01818">X</text><text x="231" y="778" font-size="9" fill="#1010e0">Z</text></g>
</svg>
<view-tools></view-tools>
<div class="win"><button aria-label="Minimize document"><sw-icon name="min"></sw-icon></button><button aria-label="Restore document"><sw-icon name="restore"></sw-icon></button><button aria-label="Close document"><sw-icon name="close"></sw-icon></button></div>
<task-pane></task-pane>`);

/* ---------- bottom rows ---------- */
define('model-tabs', `<style>${RESET}
:host{display:flex;height:15px;border-top:1px solid #000;background:#e0e3ec;font:12px/13px ${ARIAL};color:#20182c}
.nav{display:flex;width:69px;padding:0 2px;background:#b9bccd;border-right:2px solid #50526a}
.nav button{width:16px;height:14px;border:1px solid #8f93a6;display:flex;align-items:center;justify-content:center}
.nav svg{width:10px;height:10px}
.t{height:14px;text-align:center;border:1px solid #50526a;border-width:0 2px 1px 0;background:#bfc1d4}
.on{width:56px;font-weight:bold;background:#e0e3ee}.m{width:103px;padding-right:7px}
</style><div class="nav"><button aria-label="First"><svg viewBox="0 0 10 10" fill="#8e91a5"><path d="M1 0h2v10H1ZM9 0v10L3 5Z"/></svg></button><button aria-label="Previous"><svg viewBox="0 0 10 10" fill="#8e91a5"><path d="M8 0v10L2 5Z"/></svg></button><button aria-label="Next"><svg viewBox="0 0 10 10" fill="#8e91a5"><path d="M2 0v10L8 5Z"/></svg></button><button aria-label="Last"><svg viewBox="0 0 10 10" fill="#8e91a5"><path d="M7 0h2v10H7ZM1 0v10L7 5Z"/></svg></button></div><button class="t on">Model</button><button class="t m">Motion Study 1</button>`);

define('status-bar', `<style>${RESET}
:host{display:flex;align-items:center;height:24px;padding:0 14px 2px 3px;border-top:1px solid #55586a;background:linear-gradient(#ced1e6,#c6c9dc 40%,#adb1be);font:12px/20px ${TREE};color:#15101c}
.grow{flex:1}
i{width:1px;height:16px;background:#e9e9ee;margin-right:7px}
i+span{margin:0 6px 0 -3px}
.h{margin:0 50px 0 1px}
</style><span class="grow">Select entities to modify their appearance</span><i></i><i></i><span>Editing Part</span><i></i><i></i><i></i><sw-icon class="h" name="qhelp"></sw-icon><sw-icon name="tag"></sw-icon>`);

define('task-button', `<style>${RESET}
:host{display:block;flex:none;width:156px}
button{display:flex;align-items:center;gap:5px;width:100%;height:26px;padding-left:7px;border:1px solid #8a8c86;border-radius:3px;background:linear-gradient(#77786f,#4c4d47 48%,#20211d 52%,#33342e);color:#f0f0ee;box-shadow:0 0 0 1px #1a1b18;white-space:nowrap}
:host([active]) button{border-color:#55574f;background:linear-gradient(#33352a,#1a1b14 50%,#050604 52%,#14150f)}
</style><button><sw-icon></sw-icon><span><slot></slot></span></button>`,
 (h,r)=>{ const n=document.createElement('sw-icon'); n.setAttribute('name',h.getAttribute('icon')); r.querySelector('sw-icon').replaceWith(n); });

define('task-bar', `<style>${RESET}
:host{display:flex;align-items:center;position:relative;height:34px;padding:4px 16px 0 12px;border-top:1px solid #0d0d10;background:radial-gradient(ellipse 90px 30px at 310px 10px,#3c4a2055,transparent),radial-gradient(ellipse 120px 26px at 640px 8px,#5a5f4a55,transparent),linear-gradient(#4a4b57 0 3px,#8b8c90 3px 4px,#5c5d5c 5px,#323330 18px,#101110 19px,#181918);font:12px/16px ${TREE};color:#e6e6e6}
.orb{width:32px;height:32px}
.orb sw-icon{width:32px;height:32px}
.grip{width:6px;height:22px;flex:none;background:radial-gradient(circle,#8b8d88 1px,transparent 1px) 0 0/4px 4px}
.g1{margin:0 5px 0 20px}
.btns{display:flex;gap:4px}
.tray{display:flex;align-items:center;margin-left:auto;gap:2px}
.tray .b{margin:-8px 7px 0 5px;font:16px/14px ${ARIAL}}
.lang{width:17px;margin:0 20px 0 3px;background:#a3bccb;color:#20242c;line-height:15px}
.clock{margin-left:8px}
</style><button class="orb" aria-label="Start"><sw-icon name="orb"></sw-icon></button><div class="grip g1"></div>
<div class="btns"><task-button icon="winfolder">D:\\Solid terveim</task-button><task-button active icon="logo">SolidWorks Premium...</task-button><task-button icon="paint">névtelen - Paint</task-button></div>
<div class="tray"><div class="grip"></div><span>Asztal</span><span class="b">»</span><div class="grip"></div><span class="lang">HU</span><sw-icon name="swirl"></sw-icon><sw-icon name="volume"></sw-icon><sw-icon name="view"></sw-icon><sw-icon name="ati"></sw-icon><sw-icon name="nvidia"></sw-icon><sw-icon name="bluetooth"></sw-icon><sw-icon name="wifi"></sw-icon><span class="clock">2:27</span></div>`);

define('tool-tip', `<style>:host{display:block;padding:0 2px;border:1px solid #000;background:#ffffe1;box-shadow:2px 2px 2px #0009;font:12px/16px ${TREE};color:#000;white-space:nowrap}</style><slot></slot>`);

define('sw-app', `<style>
:host{display:grid;grid-template-rows:auto auto minmax(0,1fr) auto auto auto;height:100vh}
main{display:flex;position:relative;min-height:0}
command-tabs{position:absolute;left:2px;top:0;z-index:2}
tool-tip{position:absolute;left:0;bottom:31px;z-index:3}
</style>
<sw-titlebar></sw-titlebar><sw-ribbon></sw-ribbon>
<main><command-tabs></command-tabs><feature-panel></feature-panel><model-view></model-view></main>
<model-tabs></model-tabs><status-bar></status-bar><task-bar></task-bar>
<tool-tip role="tooltip">Az indításhoz kattintson ide.</tool-tip>`);
</script>
</body>
</html>
